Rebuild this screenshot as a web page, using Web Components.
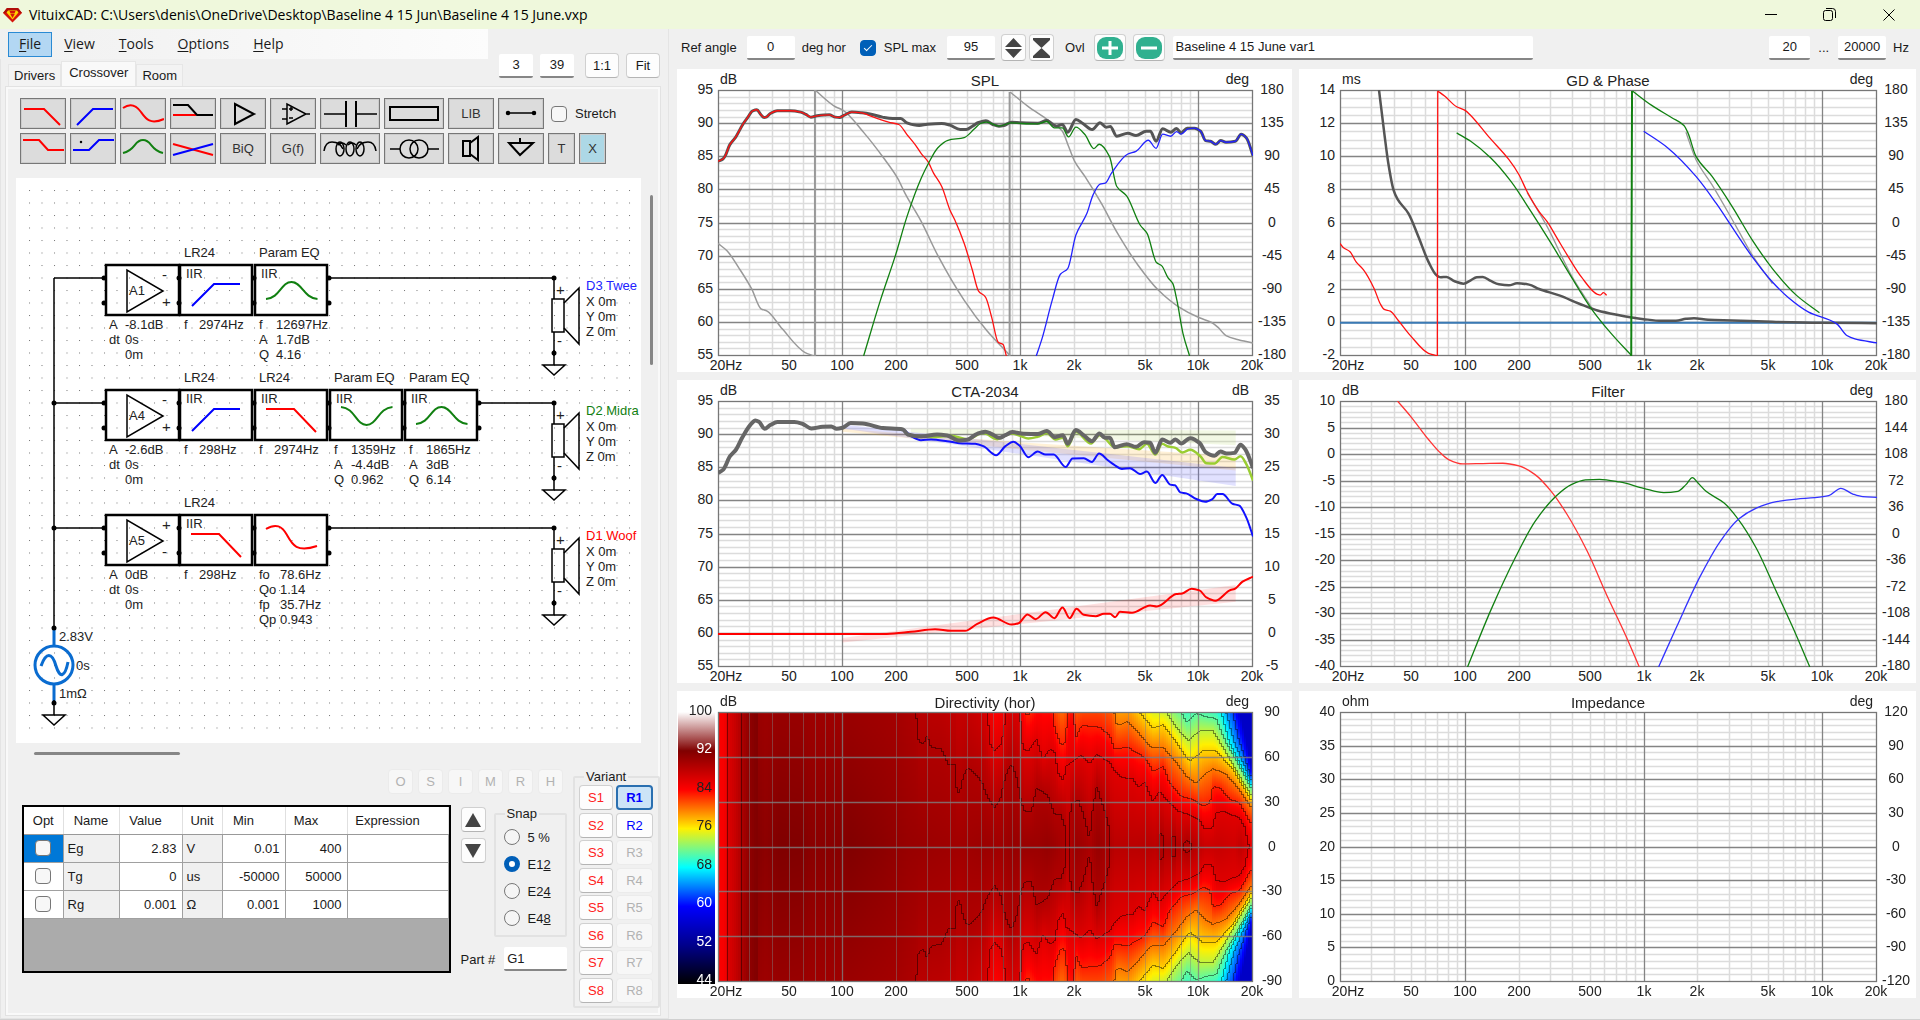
<!DOCTYPE html>
<html lang="en">
<head>
<meta charset="utf-8">
<title>VituixCAD</title>
<style>
  html, body { margin: 0; height: 100%; }
  body { background: #f0f0f0; color: #1a1a1a; font: 13px/15px "Liberation Sans", Arial, sans-serif; overflow: hidden; }
</style>
</head>
<body>
<vx-app></vx-app>
<script>
// Styles shared by every element that shows form controls
const CONTROLS = `
  * { box-sizing: border-box; }
  button, input { font: inherit; color: inherit; margin: 0; }
  input.box { height: 24px; padding: 0 3px; border: 0; border-bottom: 2px solid #868686; border-radius: 2px; background: #fff; outline: 0; }
  input.mid { text-align: center; }
  .btn { display: flex; align-items: center; justify-content: center; padding: 0; height: 25px; background: #fdfdfd; border: 1px solid #d0d0d0; border-bottom-color: #b4b4b4; border-radius: 4px; }
  .btn:disabled { color: #b2b2b2; background: #f7f7f7; border-color: #ebebeb; }
  input[type=checkbox] { appearance: none; width: 16px; height: 16px; border: 1px solid #777; border-radius: 4px; background: #f7f7f7; flex: none; }
  input[type=checkbox]:checked { border-color: #005fb8; background: #005fb8; }
  input[type=checkbox]:checked::after { content: ''; display: block; width: 7px; height: 3px; margin: 4px 0 0 3px; border: solid #fff; border-width: 0 0 1px 1px; transform: rotate(-45deg); }
  svg { display: block; }
`;

class VxElement extends HTMLElement {
  constructor() { super(); this._shadow = this.attachShadow({ mode: 'open' }); }
  connectedCallback() { this._shadow.innerHTML = `<style>${CONTROLS}${this.css()}</style>${this.html()}`; this.ready?.(); }
  css() { return ''; }
  html() { return ''; }
}

class TitleBar extends VxElement {
  css() { return `
    :host { display: flex; align-items: center; height: 29px; flex: none; background: #eff8dc; color: #000; font: 14px/20px "Open Sans", "Noto Sans", sans-serif; }
    .logo { margin: 0 7px 0 3px; }
    .name { flex: 1; white-space: nowrap; }
    button { width: 58px; height: 29px; border: 0; padding: 0; background: none; display: grid; place-items: center; }
    button:last-child { width: 62px; }`; }
  html() { return `
    <svg class="logo" width="19" height="16" viewBox="0 0 19 16"><path d="M4 1h11l4 5-9.500 9.500L0 6z" fill="#d5150b"/><path d="M4 1h11l4 5H0z" fill="#b00e08"/><path d="M5 3.500h9l1.500 2-6 7-6-7z" fill="#ffd400"/><path d="M6.500 4h6l-1 2.500h-4zM9.500 7l2.200 0-2.200 4-2.200-4z" fill="#d5150b"/></svg>
    <span class="name">VituixCAD: C:\\Users\\denis\\OneDrive\\Desktop\\Baseline 4 15 Jun\\Baseline 4 15 June.vxp</span>
    <button aria-label="Minimize"><svg width="12" height="12"><path d="M0 5.500h12" stroke="#000"/></svg></button>
    <button aria-label="Restore"><svg width="13" height="13" fill="none" stroke="#000"><rect x=".5" y="2.500" width="9" height="10" rx="2"/><path d="M3 .5h6.500q3 0 3 3V10"/></svg></button>
    <button aria-label="Close"><svg width="12" height="12"><path d="M.5.5l11 11M11.500.5l-11 11" stroke="#000" fill="none"/></svg></button>`; }
}
customElements.define('vx-title-bar', TitleBar);

class MenuBar extends VxElement {
  css() { return `
    :host { display: flex; align-items: center; height: 30px; padding-left: 8px; background: linear-gradient(90deg, #f0f0f0, #fcfcfc); font: 14px/20px "Open Sans", "Noto Sans", sans-serif; }
    button { height: 25px; padding: 0 11px; border: 1px solid transparent; background: none; white-space: nowrap; }
    button.open { padding: 0 10px; background: #b3d7f3; border-color: #2a8ad4; }
    u { text-underline-offset: 2px; }`; }
  html() { return ['File', 'View', 'Tools', 'Options', 'Help'].map((m, i) => `<button class="${i ? '' : 'open'}"><u>${m[0]}</u>${m.slice(1)}</button>`).join(''); }
}
customElements.define('vx-menu-bar', MenuBar);

class TabStrip extends VxElement {
  css() { return `
    :host { display: flex; align-items: flex-end; height: 27px; padding-left: 8px; }
    button { height: 22px; padding: 0 5px; border: 1px solid #e6e6e6; border-bottom: 0; background: #f3f3f3; }
    button[aria-selected=true] { height: 25px; padding: 0 7px 4px; background: #f9f9f9; }`; }
  html() { return ['Drivers', 'Crossover', 'Room'].map(t => `<button role="tab" aria-selected="${t === 'Crossover'}">${t}</button>`).join(''); }
}
customElements.define('vx-tab-strip', TabStrip);

class ZoomTools extends VxElement {
  css() { return `
    :host { display: flex; align-items: center; gap: 7px; padding-right: 1px; }
    input { width: 34px; } .btn { width: 34px; } .gap { margin-left: 4px; }`; }
  html() { return `<input class="box mid" aria-label="Column" value="3"><input class="box mid" aria-label="Row" value="39"><button class="btn gap">1:1</button><button class="btn">Fit</button>`; }
}
customElements.define('vx-zoom-tools', ZoomTools);

const ICONS = {
  lowpass: '<path d="M4 11h20l16 16" stroke="#f00" stroke-width="2"/>',
  highpass: '<path d="M7 27l16-16h20" stroke="#00f" stroke-width="2"/>',
  notch: '<path d="M3 10c7-5 13-3 18 4s9 13 23 7" stroke="#f00" stroke-width="2"/>',
  shelfmix: '<path d="M3 17h23" stroke="#f00" stroke-width="2"/><path d="M3 7h15l9 10h16" stroke-width="2"/>',
  amp: '<path d="M15 6v20l19-10z" stroke-width="2"/>',
  opamp: '<path d="M17 6v20l19-10zM12 11h5M12 21h5M36 16h4M19 11h4M21 9v4M19 20h4" stroke-width="1.500"/>',
  cap: '<path d="M4 16h22M36 16h21" /><path d="M26 3v26M36 3v26" stroke-width="2"/>',
  res: '<rect x="6" y="9" width="48" height="13" stroke-width="2"/>',
  wire: '<path d="M10 15h25"/><circle cx="10" cy="15" r="1.500" fill="#000"/><circle cx="36" cy="15" r="1.500" fill="#000"/>',
  shelflow: '<path d="M3 7h16l9 10h16" stroke="#f00" stroke-width="2"/>',
  shelfhigh: '<path d="M3 17h16l10-10h15" stroke="#00f" stroke-width="2"/><circle cx="11" cy="9" r=".5" fill="#000"/>',
  peak: '<path d="M3 20c13-3 11-13 20-13s7 10 20 13" stroke="#118011" stroke-width="2"/>',
  cross: '<path d="M3 11l40 11" stroke="#f00" stroke-width="2"/><path d="M3 22l40-11" stroke="#00f" stroke-width="2"/>',
  coil: '<path d="M4 18c1-7 4-9 8-9s9 2 11 7M37 16c2-5 7-7 11-7s7 2 8 9M18 12q4-4 8 0M28 12q4-4 8 0" stroke-width="1.500"/><ellipse cx="20" cy="16" rx="4" ry="7"/><ellipse cx="30" cy="16" rx="4" ry="7"/><ellipse cx="40" cy="16" rx="4" ry="7"/>',
  trafo: '<circle cx="25" cy="16" r="9"/><circle cx="35" cy="16" r="9"/><path d="M6 16h10M44 16h11"/>',
  speaker: '<path d="M15 8h7v15h-7zM22 10l8-6v23l-8-6" stroke-width="2"/>',
  ground: '<path d="M22 5v5M11 10h24L22 22z" stroke-width="2"/>'
};

class ToolPalette extends VxElement {
  css() { return `
    :host { display: grid; row-gap: 4px; }
    .row { display: flex; gap: 4px; height: 31px; align-items: stretch; }
    .tool { width: 46px; padding: 0; border: 1px solid #777; outline: 1px solid #ccc; outline-offset: -2px; background: #dcdcdc; color: #333; display: grid; place-items: center; }
    .wide { width: 60px; } .small { width: 27px; } .on { background: #add8e6; }
    label { display: flex; align-items: center; gap: 8px; margin-left: 3px; }
    svg { fill: none; stroke: #000; stroke-width: 1.500; }`; }
  tool(name) {
    const wide = /^(cap|res|coil|trafo)$/.test(name), w = wide ? 58 : 44;
    const body = ICONS[name] ? `<svg width="${w}" height="29" viewBox="1 1 ${w} 29">${ICONS[name]}</svg>` : name;
    return `<button class="tool ${wide ? 'wide' : ''} ${name.length === 1 ? 'small' : ''} ${name === 'X' ? 'on' : ''}" title="${name}">${body}</button>`;
  }
  html() {
    const rows = ['lowpass highpass notch shelfmix amp opamp cap res LIB wire', 'shelflow shelfhigh peak cross BiQ G(f) coil trafo speaker ground T X'];
    return rows.map((r, i) => `<div class="row">${r.split(' ').map(t => this.tool(t)).join('')}${i ? '' : '<label><input type="checkbox">Stretch</label>'}</div>`).join('');
  }
}
customElements.define('vx-tool-palette', ToolPalette);

class Schematic extends VxElement {
  css() { return `
    :host { display: block; background: #fff; overflow: hidden; }
    svg { font-size: 13px; fill: #222; }
    .w { stroke: #000; stroke-width: 1.500; fill: none; }
    .b { stroke: #000; stroke-width: 2.500; fill: none; }
    .c { fill: none; stroke-width: 2; }
    .s { fill: none; stroke: #0a6cd0; stroke-width: 3; }`; }
  dot(x, y) { return `<circle cx="${x}" cy="${y}" r="2.500" fill="#000"/>`; }
  text(x, y, s, extra = '') { return `<text x="${x}" y="${y}" ${extra}>${s}</text>`; }
  ground(x, y) { return `<path class="w" d="M${x} ${y - 15}V${y}M${x - 11} ${y}h22l-11 10z" />`; }
  amp(y, name, gain, flip) {
    return `<rect class="b" x="90" y="${y - 13}" width="73" height="50"/><path class="w" d="M111 ${y - 8}v42l36-21z"/>` +
      this.text(113, y + 17, name) + this.text(146, y + 2, flip ? '+' : '-', 'font-size="15"') + this.text(146, y + 29, flip ? '-' : '+', 'font-size="15"') +
      this.dot(88, y) + this.dot(88, y + 25) +
      this.text(93, y + 51, 'A') + this.text(109, y + 51, gain) + this.text(93, y + 66, 'dt') + this.text(109, y + 66, '0s') + this.text(109, y + 81, '0m');
  }
  block(x, y, kind, title, params) {
    const shapes = {
      hp: ['#00f', 'M13 28L35 6h26'], lp: ['#f00', 'M12 6h28l22 23'],
      peak: ['#118011', 'M12 21c14-1 15-17 25.500-17s12 16 26 17'], dip: ['#118011', 'M12 4c14 1 15 18 25.500 18s12-17 26-18'],
      lt: ['#f00', 'M12 1c10-6 16-3 21 6s9 18 30 11']
    };
    const [color, d] = shapes[kind];
    const vx = kind === 'lt' ? 26 : (kind === 'hp' || kind === 'lp') ? 20 : 22;
    return `<rect class="b" x="${x}" y="${y - 13}" width="72" height="50"/>` + this.dot(x - 1, y) + this.dot(x - 1, y + 25) +
      `<path class="c" stroke="${color}" transform="translate(${x - 1} ${y})" d="${d}"/>` +
      (kind === 'lt' ? '' : this.text(x + 6, y, 'IIR')) + this.text(x + 4, y - 21, title) +
      params.map(([k, v], i) => this.text(x + 4, y + 51 + i * 15, k) + this.text(x + vx - 1, y + 51 + i * 15, v)).join('');
  }
  driver(y, label, color) {
    const x = 538;
    return `<path class="w" d="M${x} ${y}v21M${x} ${y + 54}v24"/><rect class="w" x="${x - 2}" y="${y + 21}" width="12" height="33"/><path class="w" d="M${x + 10} ${y + 25}L${x + 25} ${y + 10}v56L${x + 10} ${y + 50}"/>` +
      this.dot(x, y) + this.dot(x, y + 75) + this.ground(x, y + 87) +
      this.text(x + 2, y + 17, '+', 'font-size="15"') + this.text(x + 3, y + 68, '-', 'font-size="15"') +
      this.text(x + 32, y + 12, label, `fill="${color}"`) + ['X', 'Y', 'Z'].map((a, i) => this.text(x + 32, y + 28 + 15 * i, a + ' 0m')).join('');
  }
  html() {
    const rows = [100, 225, 350];
    let g = `<defs><pattern id="grid" x="13" y="12" width="12.500" height="12.500" patternUnits="userSpaceOnUse"><rect width="1" height="1" fill="#777"/></pattern></defs><rect x="13" y="12" width="620" height="545" fill="url(#grid)"/>`;
    g += `<path class="w" d="M38 450V100"/>` + rows.map(y => `<path class="w" d="M38 ${y}H89"/>`).join('') + this.dot(38, 225) + this.dot(38, 350);
    [313, 463, 313].forEach((x, i) => { g += `<path class="w" d="M${x} ${rows[i]}H538"/>` + this.dot(x, rows[i]) + this.dot(x, rows[i] + 25); });
    g += this.amp(100, 'A1', '-8.1dB') + this.amp(225, 'A4', '-2.6dB') + this.amp(350, 'A5', '0dB', true);
    g += this.block(164, 100, 'hp', 'LR24', [['f', '2974Hz']]) + this.block(239, 100, 'peak', 'Param EQ', [['f', '12697Hz'], ['A', '1.7dB'], ['Q', '4.16']]);
    g += this.block(164, 225, 'hp', 'LR24', [['f', '298Hz']]) + this.block(239, 225, 'lp', 'LR24', [['f', '2974Hz']]) +
      this.block(314, 225, 'dip', 'Param EQ', [['f', '1359Hz'], ['A', '-4.4dB'], ['Q', '0.962']]) + this.block(389, 225, 'peak', 'Param EQ', [['f', '1865Hz'], ['A', '3dB'], ['Q', '6.14']]);
    g += this.block(164, 350, 'lp', 'LR24', [['f', '298Hz']]) + this.block(239, 350, 'lt', '', [['fo', '78.6Hz'], ['Qo', '1.14'], ['fp', '35.7Hz'], ['Qp', '0.943']]);
    g += this.driver(100, 'D3 Twee', '#22f') + this.driver(225, 'D2 Midra', '#118011') + this.driver(350, 'D1 Woof', '#f00');
    g += `<path class="s" d="M38 450v18M38 507v18"/><circle class="s" cx="38" cy="487" r="19"/><path class="s" d="M25 488c5-14 11-14 15 0 4 13 9 11 12-4"/>`;
    g += this.dot(38, 450) + this.dot(38, 525) + this.ground(38, 537) + this.text(43, 463, '2.83V') + this.text(60, 492, '0s') + this.text(43, 520, '1mΩ');
    return `<svg width="900" height="564">${g}</svg>`;
  }
}
customElements.define('vx-schematic', Schematic);

class ParamTable extends VxElement {
  css() { return `
    :host { display: block; border: 2px solid #000; background: #ababab; }
    table { width: 100%; border-collapse: collapse; table-layout: fixed; background: #fff; }
    th { font-weight: normal; height: 27px; padding: 0; border-right: 1px solid #e0e0e0; border-bottom: 1px solid #999; text-align: center; }
    th.sort { padding-right: 20px; } th.val { padding-right: 10px; }
    td { height: 28px; padding: 0 5px 0 4px; border: 1px solid #a0a0a0; border-left: 0; }
    td.ro { background: #f0f0f0; } td.num { text-align: right; }
    td.opt { text-align: center; padding: 0; } td.opt input { vertical-align: middle; }
    tr.cur td.opt { background: #0078d7; }`; }
  html() {
    const cols = [['Opt', 39], ['Name', 56], ['Value', 63, 'val'], ['Unit', 40], ['Min', 63, 'sort'], ['Max', 62, 'sort'], ['Expression', 101, 'sort']];
    const rows = [['Eg', '2.83', 'V', '0.01', '400'], ['Tg', '0', 'us', '-50000', '50000'], ['Rg', '0.001', 'Ω', '0.001', '1000']];
    return `<table><colgroup>${cols.map(c => `<col style="width:${c[1]}px">`).join('')}</colgroup>
      <thead><tr>${cols.map(c => `<th class="${c[2] || ''}">${c[0]}</th>`).join('')}</tr></thead>
      <tbody>${rows.map((r, i) => `<tr class="${i ? '' : 'cur'}"><td class="opt"><input type="checkbox" aria-label="Optimize ${r[0]}"></td><td class="ro">${r[0]}</td><td class="num">${r[1]}</td><td class="ro">${r[2]}</td><td class="num">${r[3]}</td><td class="num">${r[4]}</td><td></td></tr>`).join('')}</tbody></table>`;
  }
}
customElements.define('vx-param-table', ParamTable);

class GroupBox extends VxElement {
  css() { return `
    :host { display: block; }
    fieldset { height: 100%; margin: 0; padding: 0; border: 2px solid #e2e2e2; border-radius: 2px; min-width: 0; }
    legend { margin-left: 9px; padding: 0 2px; }`; }
  html() { return `<fieldset><legend>${this.getAttribute('label')}</legend><slot></slot></fieldset>`; }
}
customElements.define('vx-group-box', GroupBox);

class SnapOptions extends VxElement {
  css() { return `
    :host { display: grid; row-gap: 11px; padding: 8px 0 0 8px; }
    label { display: flex; align-items: center; gap: 8px; height: 16px; white-space: nowrap; }
    input { appearance: none; width: 16px; height: 16px; border: 1px solid #777; border-radius: 50%; background: #f5f5f5; }
    input:checked { border: 5px solid #005fb8; background: #fff; }`; }
  html() { return ['5 %', 'E1<u>2</u>', 'E2<u>4</u>', 'E4<u>8</u>'].map((t, i) => `<label><input type="radio" name="snap" ${i === 1 ? 'checked' : ''}><span>${t}</span></label>`).join(''); }
}
customElements.define('vx-snap-options', SnapOptions);

class VariantButtons extends VxElement {
  css() { return `
    :host { display: grid; grid-template-columns: 34px 37px; column-gap: 3px; align-content: space-between; height: 218px; padding: 0 0 0 4px; margin-top: 1px; }
    .s { color: #f22; } .r:enabled { color: #00f; }
    .cur { background: #cce4f7; border: 2px solid #2a6fb0; font-weight: bold; }`; }
  html() { return [1, 2, 3, 4, 5, 6, 7, 8].map(n => `<button class="btn s">S${n}</button><button class="btn r ${n === 1 ? 'cur' : ''}" ${n > 2 ? 'disabled' : ''}>R${n}</button>`).join(''); }
}
customElements.define('vx-variant-buttons', VariantButtons);

class PartEditor extends VxElement {
  css() { return `
    :host { display: flex; gap: 8px; height: 239px; }
    .main { flex: 1; min-width: 0; display: flex; flex-direction: column; padding-left: 6px; }
    .modes { display: flex; gap: 5px; justify-content: flex-end; padding-right: 2px; }
    .modes .btn { width: 25px; }
    .work { display: flex; gap: 10px; margin-top: 11px; }
    vx-param-table { flex: 1; height: 168px; }
    .side { width: 106px; padding-top: 1px; }
    .snap { display: flex; gap: 8px; }
    .move { width: 25px; padding-top: 1px; display: grid; gap: 6px; align-content: start; }
    .move .btn { width: 25px; }
    vx-group-box.sn { flex: 1; height: 131px; }
    .part { display: flex; align-items: center; gap: 9px; margin-top: 10px; white-space: nowrap; }
    .part input { flex: 1; min-width: 0; }
    .var { width: 87px; }`; }
  html() { return `
    <div class="main">
      <div class="modes">${[...'OSIMRH'].map(c => `<button class="btn" disabled>${c}</button>`).join('')}</div>
      <div class="work">
        <vx-param-table></vx-param-table>
        <div class="side">
          <div class="snap">
            <div class="move">
              <button class="btn" aria-label="Up"><svg width="16" height="14"><path d="M8 0l8 14H0z" fill="#444"/></svg></button>
              <button class="btn" aria-label="Down"><svg width="16" height="14"><path d="M8 14l8-14H0z" fill="#444"/></svg></button>
            </div>
            <vx-group-box class="sn" label="Snap"><vx-snap-options></vx-snap-options></vx-group-box>
          </div>
          <div class="part"><label for="part">Part #</label><input id="part" class="box" value="G1"></div>
        </div>
      </div>
    </div>
    <vx-group-box class="var" label="Variant"><vx-variant-buttons></vx-variant-buttons></vx-group-box>`; }
}
customElements.define('vx-part-editor', PartEditor);

class ChartTools extends VxElement {
  css() { return `
    :host { display: flex; align-items: center; height: 40px; padding: 0 11px 3px 12px; white-space: nowrap; }
    .n { width: 48px; } .f { width: 41px; } .t { width: 360px; }
    .arrows { width: 25px; height: 27px; } .ovl { width: 32px; height: 27px; }
    label.chk { display: flex; align-items: center; gap: 8px; margin: 0 11px 0 14px; }
    .fill { flex: 1; }`; }
  html() {
    const ovl = (name, d) => `<button class="btn ovl" aria-label="${name}"><svg width="26" height="22"><rect width="26" height="22" rx="9" fill="#30b08f"/><path d="${d}" stroke="#fff" stroke-width="3"/></svg></button>`;
    return `
    <label for="ref">Ref angle</label><input id="ref" class="box mid n" style="margin:0 7px 0 10px" value="0"><span>deg hor</span>
    <label class="chk"><input type="checkbox" checked>SPL max</label><input class="box mid n" aria-label="SPL max value" value="95">
    <button class="btn arrows" style="margin:0 3px 0 6px" aria-label="Step"><svg width="17" height="20" fill="#444"><path d="M8.500 0l8.500 9H0zM0 11h17l-8.500 9z"/></svg></button>
    <button class="btn arrows" aria-label="Fit scale"><svg width="17" height="20" fill="#444"><path d="M0 0h17v2l-8.500 8L0 2zM8.500 10l8.500 8v2H0v-2z"/></svg></button>
    <span style="margin:0 9px 0 11px">Ovl</span>${ovl('Add overlay', 'M13 4v14M5 11h16')}<span style="width:7px"></span>${ovl('Remove overlay', 'M5 11h16')}
    <input class="box t" style="margin-left:8px" aria-label="Overlay name" value="Baseline 4 15 June var1">
    <span class="fill"></span>
    <input class="box mid f" aria-label="Minimum frequency" value="20"><span style="margin:0 9px 0 8px">...</span><input class="box mid n" aria-label="Maximum frequency" value="20000"><span style="margin-left:7px">Hz</span>`;
  }
}
customElements.define('vx-chart-tools', ChartTools);

// Trace points live in each chart's own box [x, y, width, height]; "|" lifts the pen
const SUM_TAIL = '1308,386 1323,395 1335,423 1347,425 1360,434 1372,423 1385,428 1408,425 1422,404 1435,415 1451,468';
const SUM_HEAD = '143,485 155,478 160,470 172,435 185,415 205,372 215,355 228,334 238,331 248,346 256,354 262,352 270,343 288,334 320,334 345,338 358,345 370,353 385,349 415,346 430,353 440,354 452,347 470,338 495,340';
const CHARTS = {
  spl: {
    title: 'SPL', unit: 'dB', unit2: 'deg', y: [95, 90, 85, 80, 75, 70, 65, 60, 55], y2: [180, 135, 90, 45, 0, -45, -90, -135, -180], sub: 5, box: [143, 272, 1308, 794],
    traces: [
      ['#999', 1.5, '143,730 165,752 195,805 225,865 248,925 263,932 300,985 355,1055 378,1066 | 380,272 430,322 448,332 500,400 548,475 583,537 600,580 640,665 680,765 745,900 800,990 855,1062 | 857,278 900,320 950,362 985,395 1000,440 1015,485 1040,530 1080,610 1120,700 1170,795 1220,870 1270,920 1320,952 1350,966 1365,980 1385,1005 1410,1016 1451,1027'],
      ['#999', 2, '380,1066 380,272 | 856,1066 856,278'],
      ['#555', 3, SUM_HEAD + ' 520,345 545,353 570,357 590,357 605,370 635,378 655,374 690,372 710,377 735,390 750,390 765,380 780,369 798,364 815,375 830,380 842,378 860,368 885,370 925,371 947,363 958,372 970,380 985,375 998,398 1018,360 1035,372 1058,390 1077,370 1092,383 1102,381 1118,410 1145,401 1165,408 1190,395 1200,395 1214,425 1230,388 1250,398 1264,387 1275,400 1290,386 ' + SUM_TAIL],
      ['#f11', 1.3, SUM_HEAD + ' 510,347 535,358 560,368 585,375 605,405 625,435 640,462 656,485 670,520 690,560 710,630 722,660 745,730 765,810 780,872 797,890 812,950 828,1025 840,1032 848,1066'],
      ['#118011', 1.3, '499,1066 540,900 577,765 605,650 640,535 658,490 680,445 705,422 745,414 770,388 785,372 800,368 830,380 860,370 885,372 925,373 947,366 965,385 985,385 1000,412 1018,383 1040,405 1062,447 1075,434 1100,470 1118,560 1142,588 1175,675 1192,700 1215,787 1228,797 1243,832 1255,850 1265,900 1280,1000 1296,1066'],
      ['#22f', 1.3, '921,1066 935,1015 960,900 980,822 998,805 1018,705 1045,640 1060,585 1077,553 1090,550 1105,520 1145,463 1165,455 1195,422 1214,446 1230,404 1250,410 1264,396 1275,404 1292,388 ' + SUM_TAIL]
    ]
  },
  gd: {
    title: 'GD &amp; Phase', unit: 'ms', unit2: 'deg', y: [14, 12, 10, 8, 6, 4, 2, 0, -2], y2: [180, 135, 90, 45, 0, -45, -90, -135, -180], sub: 4, box: [125, 272, 1335, 794],
    traces: [
      ['#3a7ab5', 2, '125,967 1460,967'],
      ['#999', 1.3, '590,578 640,680 700,825 750,920 | 985,398 1010,480 1050,555 1110,680 1150,765 1200,850'],
      ['#555', 2.5, '222,272 235,400 245,490 258,570 268,598 295,640 320,710 345,785 365,825 375,831 390,830 410,843 432,850 450,840 465,831 480,830 500,842 520,852 545,855 565,849 595,853 620,866 670,885 720,910 765,930 810,942 880,956 925,961 960,961 985,955 1005,953 1040,958 1100,960 1200,964 1320,967 1460,968'],
      ['#f11', 1.3, '125,730 133,742 150,755 165,785 183,808 210,865 225,910 235,927 250,932 270,960 300,1005 345,1058 365,1065 | 367,1066 368,275 | 368,275 385,290 415,322 435,332 450,348 495,412 545,480 570,525 590,575 620,635 640,665 665,715 690,765 725,830 765,882 772,884 780,877 788,885'],
      ['#118011', 1.3, '415,400 450,425 500,475 550,545 600,635 650,730 700,830 750,925 800,1000 850,1065 | 852,275 900,318 950,355 980,378 990,400 1010,470 1050,530 1100,620 1150,720 1200,805 1260,885 1317,937'],
      ['#118011', 2, '849,1066 851,275'],
      ['#22f', 1.3, '880,395 940,445 1010,530 1060,610 1110,700 1150,770 1200,845 1240,892 1290,935 1360,970 1385,1005 1405,1015 1460,1027']
    ]
  },
  cta: {
    title: 'CTA-2034', unit: 'dB', unit2: 'dB', y: [95, 90, 85, 80, 75, 70, 65, 60, 55], y2: [35, 30, 25, 20, 15, 10, 5, 0, -5], sub: 5, box: [120, 80, 1331, 795],
    bands: [['#9acd3222', '600,163 1408,168 1408,212 870,182 600,176'], ['#ffa50028', '430,163 870,203 1408,245 1408,288 430,172'], ['#5050ff2c', '430,150 1408,280 1408,334 870,238 430,162'], ['#ff404028', '430,788 1408,630 1408,680 430,802']],
    traces: [
      ['#9acd32', 2.5, '600,184 650,188 700,184 740,194 780,176 815,194 850,177 870,183 892,192 915,187 938,176 960,195 978,190 990,215 1010,172 1048,207 1069,182 1083,192 1107,218 1137,215 1168,224 1187,208 1208,240 1225,208 1240,216 1258,220 1275,234 1295,226 1320,245 1335,266 1355,267 1375,247 1405,255 1420,245 1435,270 1451,318'],
      ['#11f', 2, '430,160 450,147 480,148 530,162 580,165 600,185 625,197 650,195 690,200 720,206 760,208 780,215 812,242 835,215 855,202 870,213 892,248 915,231 935,240 955,240 985,277 1002,252 1030,251 1050,262 1068,237 1090,257 1105,270 1125,283 1145,281 1170,298 1187,291 1208,325 1225,301 1245,330 1257,332 1270,353 1285,356 1310,373 1332,381 1350,373 1362,358 1375,358 1400,387 1417,393 1435,430 1451,485'],
      ['#666', 4, '120,295 133,285 150,245 165,225 180,190 200,152 213,138 222,142 236,163 250,152 268,143 310,143 330,148 352,162 380,157 402,156 415,163 430,160 450,146 480,147 530,161 580,165 592,180 625,186 665,180 690,183 720,198 740,196 765,178 785,172 800,178 820,190 835,182 852,173 880,178 915,179 938,170 958,188 978,182 990,208 1010,167 1030,183 1050,200 1069,177 1083,190 1095,190 1107,218 1137,209 1160,217 1180,203 1195,205 1208,235 1225,195 1245,205 1258,195 1272,207 1295,191 1318,205 1333,233 1355,244 1370,231 1385,237 1405,235 1420,211 1432,225 1451,280'],
      ['#f00', 2, '120,776 300,776 540,776 600,770 660,762 700,767 735,767 765,746 805,727 850,748 868,744 890,718 910,732 935,711 957,729 977,697 995,729 1012,701 1030,719 1060,723 1080,716 1095,716 1108,726 1120,710 1150,713 1195,691 1212,694 1260,657 1275,655 1298,641 1318,646 1335,667 1357,677 1395,645 1405,642 1425,620 1451,605']
    ]
  },
  filter: {
    title: 'Filter', unit: 'dB', unit2: 'deg', y: [10, 5, 0, -5, -10, -15, -20, -25, -30, -35, -40], y2: [180, 144, 108, 72, 36, 0, -36, -72, -108, -144, -180], sub: 5, box: [125, 80, 1335, 795],
    traces: [
      ['#f33', 1.3, '268,80 300,125 345,195 372,232 395,255 430,268 480,267 530,266 570,274 610,300 650,350 690,420 740,530 790,665 835,780 869,875'],
      ['#118011', 1.3, '442,875 500,705 560,550 610,440 663,363 700,330 735,316 770,314 820,322 880,341 930,354 965,350 985,330 1001,309 1015,325 1035,350 1080,385 1116,435 1160,520 1210,650 1250,755 1293,875'],
      ['#33f', 1.3, '917,875 960,760 1020,605 1070,500 1116,433 1160,400 1210,381 1260,373 1305,369 1340,363 1370,341 1400,358 1425,366 1460,368']
    ]
  },
  directivity: {
    title: 'Directivity (hor)', unit: 'dB', unit2: 'deg', y: [], y2: [90, 60, 30, 0, -30, -60, -90], sub: 1, box: [120, 85, 1331, 801], heat: true,
    scale: [100, 92, 84, 76, 68, 60, 52, 44]
  },
  impedance: { title: 'Impedance', unit: 'ohm', unit2: 'deg', y: [40, 35, 30, 25, 20, 15, 10, 5, 0], y2: [120, 90, 60, 30, 0, -30, -60, -90, -120], sub: 5, box: [0, 0, 1, 1] }
};

// dB colour scale, loudest first
const HEAT = [[100, 255, 255, 255], [92, 128, 0, 0], [84, 255, 0, 0], [76, 255, 240, 0], [68, 0, 255, 255], [60, 0, 0, 255], [52, 0, 0, 140], [44, 0, 0, 0]];
const ON_AXIS = '120,84.300 134,84.600 141,86 160,87.500 175,89 195,91 213,91.900 236,91.200 268,92 330,91.900 352,91.300 415,91.500 450,91.900 530,91.200 590,90.500 660,90.200 720,89.900 785,90.300 820,90 852,90.600 915,90.300 938,90.700 958,90.200 980,89.300 990,88.500 997,89.200 1010,90.500 1045,89.400 1065,90.600 1095,89.100 1107,88.400 1160,88.400 1195,88.600 1208,88.300 1218,88.900 1225,89.200 1234,88.900 1246,88.900 1254,89.200 1262,88.900 1273,88.900 1288,89.200 1302,88.900 1333,87.300 1370,87.500 1405,87 1420,88 1440,86.500 1451,84.800';
// Height of each iso-level line over frequency, upper half
const ISO = [
  [89, '120,-400 560,-200 608,60 612,85 618,165 625,180 632,175 640,155 650,190 675,195 693,240 710,240 713,310 720,330 727,290 735,260 745,252 775,290 790,335 808,370 822,345 830,300 840,260 850,240 862,275 875,355 883,380 900,380 912,313 925,320 941,335 958,390 974,390 983,425 985,482 991,482 999,355 1016,345 1030,390 1045,465 1052,380 1063,303 1070,335 1080,370 1093,425 1095,484 1215,484 1220,445 1225,445 1234,484 1246,484 1250,455 1258,455 1262,484 1273,484 1288,465 1302,484 1451,484'],
  [86, '120,-900 720,-200 780,0 790,85 797,180 808,200 825,180 838,85 850,40 868,60 872,105 879,195 892,200 912,165 929,225 945,195 958,205 966,265 979,288 987,245 1024,212 1045,240 1062,210 1095,235 1107,260 1124,280 1153,283 1165,307 1182,295 1203,350 1219,320 1236,345 1265,380 1294,390 1319,405 1329,430 1350,430 1360,385 1377,380 1418,400 1431,425 1441,480 1451,484'],
  [83, '120,-1300 780,-220 808,20 840,-60 870,-10 882,70 889,98 900,85 920,40 945,50 954,85 958,135 974,185 984,175 991,85 1000,50 1005,85 1010,163 1024,125 1070,130 1095,155 1107,195 1140,190 1182,220 1203,260 1228,245 1244,295 1273,335 1302,345 1327,365 1345,355 1352,307 1369,310 1393,343 1418,355 1449,420'],
  [80, '120,-1700 900,-90 940,-60 975,70 990,0 1015,40 1060,20 1095,40 1106,85 1113,125 1140,113 1169,150 1198,190 1228,190 1261,235 1286,275 1310,297 1331,270 1352,253 1385,270 1418,315 1449,370'],
  [77, '120,-2100 950,-120 1080,-60 1115,30 1145,40 1169,85 1203,133 1228,123 1252,160 1294,232 1327,200 1360,200 1402,255 1449,350'],
  [74, '120,-2500 1080,-180 1150,-50 1200,60 1236,85 1261,130 1290,170 1319,140 1352,140 1385,205 1418,275 1449,335'],
  [71, '120,-2900 1080,-260 1200,-20 1240,40 1273,85 1287,115 1310,90 1340,100 1360,105 1385,175 1418,245 1449,315'],
  [68, '120,-3300 1200,-100 1280,20 1340,20 1373,85 1393,175 1418,235 1449,307'],
  [65, '120,-3700 1200,-180 1340,-40 1385,85 1406,175 1449,295'],
  [62, '120,-4100 1200,-260 1340,-120 1402,85 1414,155 1449,285'],
  [59, '120,-4500 1340,-200 1412,85 1449,270'],
  [56, '120,-5000 1340,-280 1418,85 1449,250']
];

const parsePoints = (s) => s.trim().split(/\s+/).map(p => p.split(',').map(Number));
function sampler(s) {
  const pts = parsePoints(s);
  return (x) => {
    let i = 1;
    while (i < pts.length - 1 && pts[i][0] < x) i++;
    const [a, b] = [pts[i - 1], pts[i]];
    return a[1] + (b[1] - a[1]) * Math.min(1, Math.max(0, (x - a[0]) / (b[0] - a[0])));
  };
}
// Cubic through the points, with slopes that never overshoot a peak
function smoothPath(s) {
  return s.split('|').map(part => {
    const p = parsePoints(part), n = p.length;
    if (n === 2) return `M${p[0]}L${p[1]}`;
    const h = [], k = [], m = [];
    for (let i = 0; i < n - 1; i++) { h[i] = p[i + 1][0] - p[i][0]; k[i] = (p[i + 1][1] - p[i][1]) / h[i]; }
    for (let i = 1; i < n - 1; i++) {
      const w1 = 2 * h[i] + h[i - 1], w2 = h[i] + 2 * h[i - 1];
      m[i] = k[i - 1] * k[i] <= 0 ? 0 : (w1 + w2) / (w1 / k[i - 1] + w2 / k[i]);
    }
    m[0] = k[0]; m[n - 1] = k[n - 2];
    let d = `M${p[0]}`;
    for (let i = 0; i < n - 1; i++) {
      const q = h[i] / 3, a = p[i], b = p[i + 1];
      d += `C${a[0] + q},${a[1] + m[i] * q} ${b[0] - q},${b[1] - m[i + 1] * q} ${b}`;
    }
    return d;
  }).join('');
}
function heatColor(v) {
  let i = 1;
  while (i < HEAT.length - 1 && HEAT[i][0] > v) i++;
  const a = HEAT[i - 1], b = HEAT[i], t = Math.min(1, Math.max(0, (a[0] - v) / (a[0] - b[0])));
  return [1, 2, 3].map(k => a[k] + (b[k] - a[k]) * t);
}

class Chart extends VxElement {
  css() { return `
    :host { display: block; background: #fff; overflow: hidden; min-width: 0; min-height: 0; }
    .view > svg { font-size: 14px; fill: #222; }
    .title { font-size: 15px; }
    canvas { display: block; }
    .view svg svg { fill: none; overflow: hidden; }`; }
  html() { return '<div class="view"></div>'; }
  ready() {
    this._observer = new ResizeObserver(() => this.draw());
    this._observer.observe(this);
    this.draw();
  }
  disconnectedCallback() { this._observer?.disconnect(); }
  draw() {
    const { width, height } = this.getBoundingClientRect();
    if (width < 100 || height < 80) return;
    const c = CHARTS[this.getAttribute('kind')];
    const W = Math.round(width), H = Math.round(height);
    const l = 41, t = 21, r = W - 40, b = H - 17, pw = r - l, ph = b - t;
    const fx = (f) => Math.round(l + pw * Math.log10(f / 20) / 3);
    const minor = c.heat ? 'rgba(128,128,128,.45)' : '#dcdcdc', major = c.heat ? 'rgba(128,128,128,.8)' : '#848484';
    let light = '', dark = '', out = '';
    for (let dec = 10; dec <= 10000; dec *= 10) for (let k = 1; k < 10; k++) {
      const f = dec * k;
      if (f <= 20 || f >= 20000) continue;
      const seg = `M${fx(f) + .5} ${t}V${b}`;
      if (k === 1) dark += seg; else light += seg;
    }
    const n = (c.y2.length - 1) * c.sub;
    for (let i = 1; i < n; i++) {
      const seg = `M${l} ${Math.round(t + ph * i / n) + .5}H${r}`;
      if (i % c.sub) light += seg; else dark += seg;
    }
    if (c.heat) out += `<foreignObject x="${l}" y="${t}" width="${pw}" height="${ph}"><canvas width="${pw}" height="${ph}"></canvas></foreignObject>`;
    out += `<path d="${light}" stroke="${minor}" stroke-width="${c.heat ? 1 : 1.5}"/><path d="${dark}" stroke="${major}" stroke-width="1.3"/>`;
    out += `<rect x="${l + .5}" y="${t + .5}" width="${pw}" height="${ph}" fill="none" stroke="#777" stroke-width="1.3"/>`;
    out += `<svg x="${l}" y="${t}" width="${pw + 1}" height="${ph + 1}" viewBox="${c.box.join(' ')}" preserveAspectRatio="none">`;
    out += (c.bands || []).map(([fill, p]) => `<polygon points="${p}" fill="${fill}"/>`).join('');
    out += (c.traces || []).map(([stroke, w, p]) => `<path d="${smoothPath(p)}" stroke="${stroke}" stroke-width="${w}" stroke-linejoin="round" vector-effect="non-scaling-stroke"/>`).join('') + '</svg>';
    if (c.scale) {
      out += `<defs><linearGradient id="heat" x2="0" y2="1">${HEAT.map(h => `<stop offset="${(100 - h[0]) / 56}" stop-color="rgb(${h.slice(1)})"/>`).join('')}</linearGradient></defs><rect x="1" y="${t}" width="37" height="${ph + 3}" fill="url(#heat)"/>`;
      out += c.scale.map((v, i) => `<text x="${l - 6}" y="${Math.round(t + 3 + ph * i / 7)}" text-anchor="end" ${[92, 60, 52, 44].includes(v) ? 'fill="#fff"' : ''}>${v}</text>`).join('');
    }
    out += c.y.map((v, i) => `<text x="${l - 5}" y="${Math.round(t + 4 + ph * i / (c.y.length - 1))}" text-anchor="end">${v}</text>`).join('');
    out += c.y2.map((v, i) => `<text x="${r + 20}" y="${Math.round(t + 4 + ph * i / (c.y2.length - 1))}" text-anchor="middle">${v}</text>`).join('');
    out += [[20, '20Hz'], [50, '50'], [100, '100'], [200, '200'], [500, '500'], [1000, '1k'], [2000, '2k'], [5000, '5k'], [10000, '10k'], [20000, '20k']]
      .map(([f, s]) => `<text x="${fx(f) + (f === 20 ? 8 : 0)}" y="${b + 15}" text-anchor="middle">${s}</text>`).join('');
    out += `<text x="${l + 2}" y="${t - 6}">${c.unit}</text><text x="${r - 3}" y="${t - 6}" text-anchor="end">${c.unit2}</text><text class="title" x="${l + pw / 2}" y="${t - 4}" text-anchor="middle">${c.title}</text>`;
    this._shadow.querySelector('.view').innerHTML = `<svg width="${W}" height="${H}">${out}</svg>`;
    if (c.heat) this.drawHeat(this._shadow.querySelector('canvas'), c.box);
  }
  drawHeat(canvas, [bx, , bw]) {
    const { width: w, height: h } = canvas, ctx = canvas.getContext('2d');
    const axis = sampler(ON_AXIS), iso = ISO.map(([level, s]) => [level, sampler(s)]);
    const v = new Float32Array(w * h);
    for (let i = 0; i < w; i++) {
      const x = bx + bw * (i - i % 2) / w, peak = axis(x);
      const knots = [[485, peak]];
      if (x > 215) for (const [level, f] of iso) {
        const y = Math.min(f(x), knots[knots.length - 1][0] - 1);
        if (level < peak) knots.push([y, level]);
      }
      for (let j = 0; j < h; j++) {
        const y = 485 - Math.abs(j / h - .5) * 800;
        let k = 1;
        while (k < knots.length - 1 && knots[k][0] > y) k++;
        const a = knots[k - 1], b = knots[k];
        v[j * w + i] = Math.max(56, b ? a[1] + (b[1] - a[1]) * (a[0] - y) / (a[0] - b[0]) : peak);
        if (x <= 215) v[j * w + i] = peak;
      }
    }
    const img = ctx.createImageData(w, h);
    const band = (q) => Math.max(59, Math.min(89, Math.floor((q - 86) / 3) * 3 + 86));
    for (let j = 0; j < h; j++) for (let i = 0; i < w; i++) {
      const o = j * w + i, q = v[o];
      const edge = (i < w - 1 && band(v[o + 1]) !== band(q)) || (j < h - 1 && band(v[o + w]) !== band(q));
      heatColor(q).forEach((col, k) => { img.data[o * 4 + k] = edge ? col * .55 : col; });
      img.data[o * 4 + 3] = 255;
    }
    ctx.putImageData(img, 0, 0);
  }
}
customElements.define('vx-chart', Chart);

class App extends VxElement {
  css() { return `
    :host { display: flex; flex-direction: column; height: 100vh; border-bottom: 1px solid #d0d0d0; box-sizing: border-box; }
    main { flex: 1; min-height: 0; display: flex; }
    aside { flex: 0 0 669px; min-width: 0; display: flex; flex-direction: column; border: solid #e4e4e4; border-width: 0 1px 1px 1px; padding: 0 7px 2px 0; }
    header { display: flex; justify-content: space-between; margin-left: -1px; }
    .nav { width: 488px; }
    vx-zoom-tools { align-self: flex-end; padding-bottom: 8px; }
    .page { flex: 1; min-height: 0; display: flex; flex-direction: column; margin-left: 4px; padding: 11px 0 7px 10px; border: 1px solid #e2e2e2; box-shadow: inset 2px 2px #f9f9f9, inset -2px -2px #f9f9f9; }
    vx-tool-palette { margin-left: 4px; }
    .sheet { flex: 1; min-height: 0; display: flex; gap: 9px; margin-top: 14px; }
    vx-schematic { flex: 1; min-width: 0; }
    .vbar { width: 10px; padding-top: 17px; }
    .vbar i { display: block; width: 3px; height: 170px; border-radius: 2px; background: #868686; }
    .hbar { height: 26px; padding: 9px 0 0 18px; }
    .hbar i { display: block; width: 146px; height: 3px; border-radius: 2px; background: #868686; }
    section { flex: 1; min-width: 0; display: flex; flex-direction: column; }
    .charts { flex: 1; min-height: 0; display: grid; gap: 8px 7px; grid-template-columns: minmax(0, 615fr) minmax(0, 617fr); grid-template-rows: minmax(0, 303fr) minmax(0, 303fr) minmax(0, 307fr); padding: 0 4px 21px 8px; }`; }
  html() { return `
    <vx-title-bar></vx-title-bar>
    <main>
      <aside>
        <header><div class="nav"><vx-menu-bar></vx-menu-bar><vx-tab-strip role="tablist"></vx-tab-strip></div><vx-zoom-tools></vx-zoom-tools></header>
        <div class="page">
          <vx-tool-palette></vx-tool-palette>
          <div class="sheet"><vx-schematic></vx-schematic><div class="vbar"><i></i></div></div>
          <div class="hbar"><i></i></div>
          <vx-part-editor></vx-part-editor>
        </div>
      </aside>
      <section>
        <vx-chart-tools></vx-chart-tools>
        <div class="charts">${['spl', 'gd', 'cta', 'filter', 'directivity', 'impedance'].map(k => `<vx-chart kind="${k}"></vx-chart>`).join('')}</div>
      </section>
    </main>`; }
}
customElements.define('vx-app', App);
</script>
</body>
</html>
